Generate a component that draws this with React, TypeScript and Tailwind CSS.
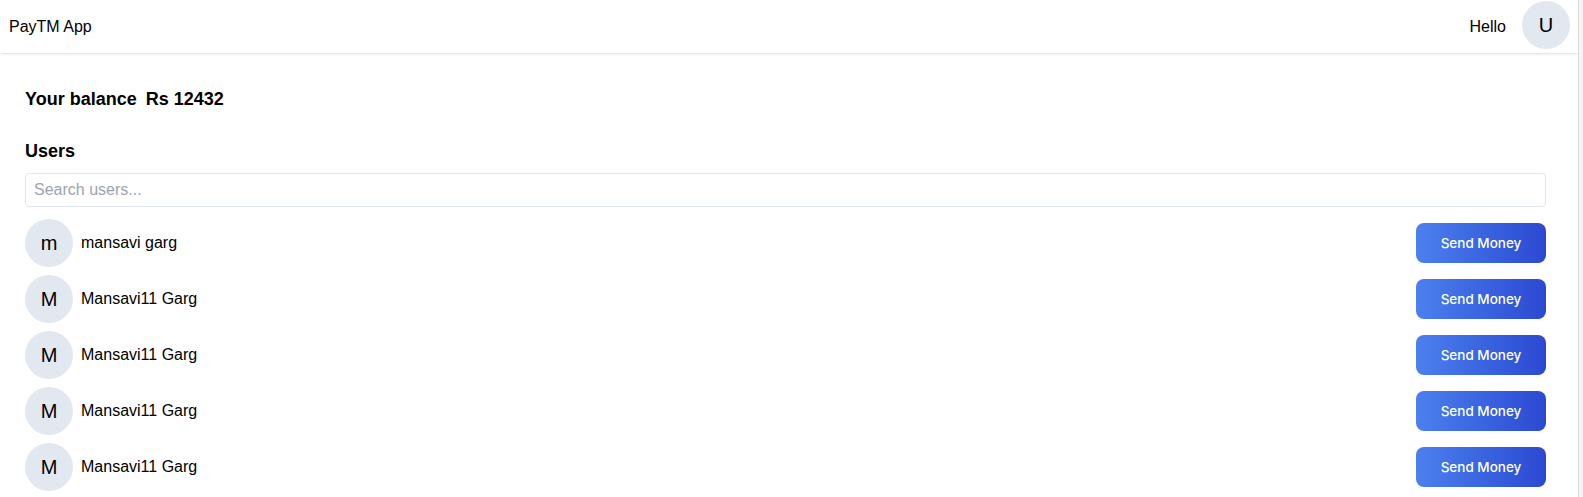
import React from "react";

const users = [
  { first: "mansavi", last: "garg" },
  { first: "Mansavi11", last: "Garg" },
  { first: "Mansavi11", last: "Garg" },
  { first: "Mansavi11", last: "Garg" },
  { first: "Mansavi11", last: "Garg" },
];

function Avatar({ letter }: { letter: string }) {
  return (
    <div className="rounded-full h-12 w-12 bg-[#e2e8f0] flex items-center justify-center text-xl shrink-0">
      {letter}
    </div>
  );
}

export default function App() {
  return (
    <div
      className="flex h-screen overflow-hidden bg-white text-black"
      style={{ fontFamily: '"Liberation Sans", Arial, Helvetica, sans-serif' }}
    >
      <div className="w-[1578px] shrink-0 flex flex-col">
        <div className="h-[53px] flex justify-between shadow-[0_1px_3px_0_rgba(0,0,0,0.1),0_1px_2px_-1px_rgba(0,0,0,0.1)] shrink-0">
          <div className="flex items-center pl-[9px] text-base">PayTM App</div>
          <div className="flex">
            <div className="flex items-center mr-4 text-base">Hello</div>
            <div className="mt-px mr-2">
              <Avatar letter="U" />
            </div>
          </div>
        </div>
        <div className="ml-[25px] mr-8 mt-8">
          <div className="flex text-lg leading-7">
            <div className="font-bold">Your balance</div>
            <div className="font-bold ml-[9px]">Rs 12432</div>
          </div>
          <div className="font-bold mt-6 text-lg leading-7">Users</div>
          <div className="my-2">
            <input
              type="text"
              placeholder="Search users..."
              className="w-full px-2 py-1 border rounded border-[#e2e8f0] text-base leading-6 placeholder:text-[#9ca3af] outline-none"
            />
          </div>
          <div>
            {users.map((u, i) => (
              <div key={i} className="flex justify-between h-14">
                <div className="flex">
                  <div className="mt-1 mr-2">
                    <Avatar letter={u.first[0]} />
                  </div>
                  <div className="flex items-center text-base">
                    {u.first} {u.last}
                  </div>
                </div>
                <div className="flex items-center">
                  <button
                    type="button"
                    className="h-10 w-[130px] text-white bg-gradient-to-r from-[#4c80ee] to-[#2c48d2] font-medium rounded-lg text-[13.5px] font-['Inter',sans-serif]"
                  >
                    Send Money
                  </button>
                </div>
              </div>
            ))}
          </div>
        </div>
      </div>
      <div className="flex-1 border-l border-[#dcdcdc] bg-[#f5f5f5]" />
    </div>
  );
}
